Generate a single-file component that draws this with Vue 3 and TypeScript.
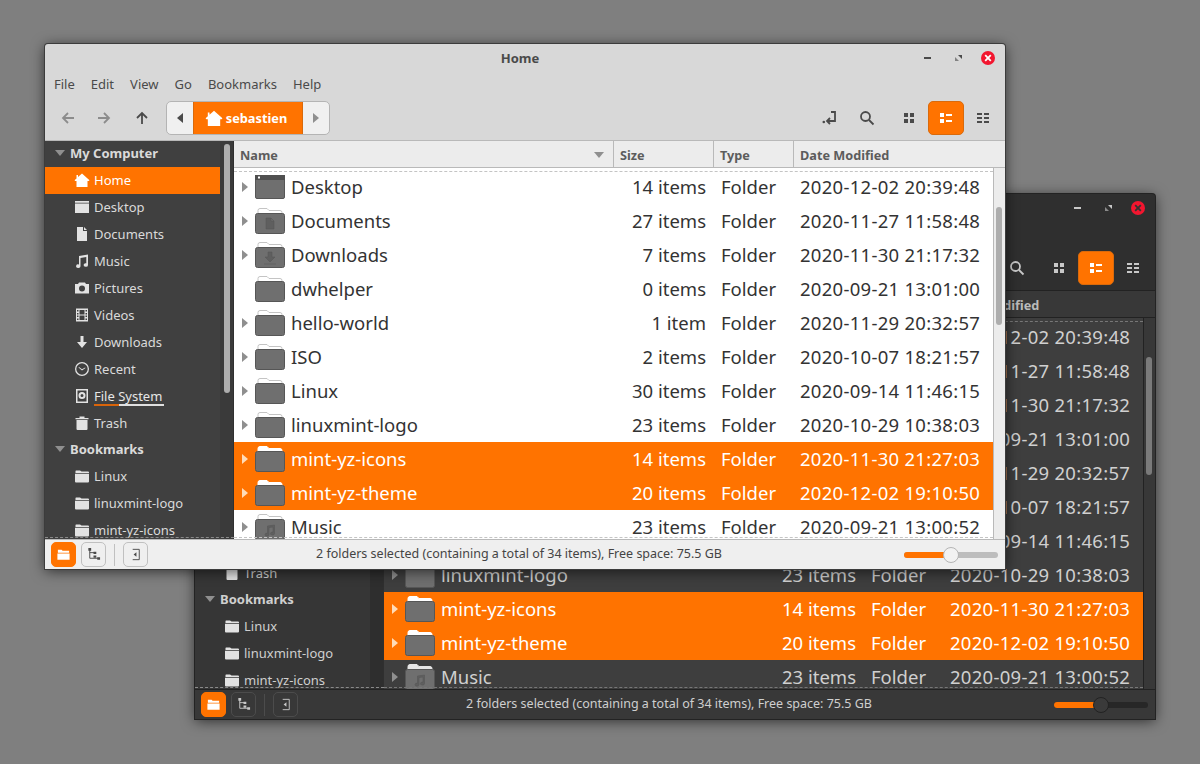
<template>
  <div class="desktop">
    <section v-for="win in windows" :key="win.theme" class="window" :class="win.theme">
      <header class="titlebar">
        <span></span>
        <h1>Home</h1>
        <div class="controls">
          <svg viewBox="0 0 16 16"><rect x="4" y="7" width="7" height="2" class="glyph" /></svg>
          <svg viewBox="0 0 16 16"><path d="M8 5h4v4z" class="glyph" /><path d="M5 7v4h4z" class="glyph soft" /></svg>
          <svg viewBox="0 0 16 16">
            <circle cx="8" cy="8" r="7" fill="#f2162f" />
            <path d="M5.200 5.200l5.600 5.600M10.800 5.200l-5.600 5.600" class="close-x" />
          </svg>
        </div>
      </header>

      <nav class="menubar">
        <span v-for="item in menu" :key="item">{{ item }}</span>
      </nav>

      <div class="toolbar">
        <button class="tool off"><svg viewBox="0 0 16 16"><path d="M14 8H3M8 3 3 8l5 5" /></svg></button>
        <button class="tool off"><svg viewBox="0 0 16 16"><path d="M2 8h11M8 3l5 5-5 5" /></svg></button>
        <button class="tool up"><svg viewBox="0 0 16 16"><path d="M8 14V3M3 8l5-5 5 5" /></svg></button>
        <div class="pathbar">
          <button class="path-end"><i class="tri left"></i></button>
          <button class="path-home">
            <svg viewBox="0 0 16 16"><path :d="icons.home" /></svg>
            sebastien
          </button>
          <button class="path-end"><i class="tri right"></i></button>
        </div>
        <div class="tool-right">
          <button class="tool"><svg viewBox="0 0 16 16"><path d="M9 2h4v9H5M8 8l-3 3 3 3" /><circle cx="1.800" cy="12" r="1.300" class="solid" /></svg></button>
          <button class="tool"><svg viewBox="0 0 16 16"><circle cx="6.500" cy="6.500" r="4.500" /><path d="m10 10 4.500 4.500" /></svg></button>
          <button class="tool spaced"><svg viewBox="0 0 16 16"><path d="M3 3h4v4H3zM9 3h4v4H9zM3 9h4v4H3zM9 9h4v4H9z" class="solid" /></svg></button>
          <button class="tool active"><svg viewBox="0 0 16 16"><path d="M2 3h4v4H2zM2 9h4v4H2zM8 4h6v2H8zM8 10h6v2H8z" class="solid" /></svg></button>
          <button class="tool"><svg viewBox="0 0 16 16"><path d="M2 3h5v2H2zM9 3h5v2H9zM2 7h5v2H2zM9 7h5v2H9zM2 11h5v2H2zM9 11h5v2H9z" class="solid" /></svg></button>
        </div>
      </div>

      <div class="body">
        <aside class="sidebar">
          <div class="places">
            <template v-for="group in places" :key="group.title">
              <div class="group-title"><i class="tri down"></i>{{ group.title }}</div>
              <div v-for="place in group.items" :key="place.name" class="place" :class="{ current: place.name === 'Home' }">
                <svg viewBox="0 0 16 16"><path :d="icons[place.icon]" fill-rule="evenodd" /></svg>
                <span class="place-name" :class="{ disk: place.icon === 'disk' }">{{ place.name }}</span>
              </div>
            </template>
          </div>
          <div class="side-scroll"><span></span></div>
        </aside>

        <main class="files">
          <div class="columns">
            <div class="column">Name<i class="tri down sort"></i></div>
            <div class="column">Size</div>
            <div class="column">Type</div>
            <div class="column">Date Modified</div>
          </div>
          <div class="list-wrap">
            <div class="list">
              <div v-for="file in files" :key="file.name" class="row" :class="{ selected: file.selected }">
                <div class="name">
                  <i class="tri right expander" :class="{ hidden: file.empty }"></i>
                  <svg v-if="file.kind === 'desktop'" class="folder" viewBox="0 0 30 26">
                    <rect x=".5" y="1.500" width="29" height="23" rx="1.500" class="f-body" />
                    <rect x="0" y="1" width="30" height="5" class="f-bar" />
                    <rect x="3" y="2.500" width="2" height="2" fill="#fff" />
                  </svg>
                  <svg v-else class="folder" viewBox="0 0 30 26">
                    <path d="M3 6V2.500Q3 .5 5 .5h7l2 2h11q2 0 2 2V6" class="f-tab" />
                    <rect x=".5" y="5.500" width="29" height="20" rx="2" class="f-body" />
                    <path v-if="file.kind" :d="emblems[file.kind]" class="f-emblem" />
                  </svg>
                  <span>{{ file.name }}</span>
                </div>
                <div class="size">{{ file.size }}</div>
                <div class="type">Folder</div>
                <div class="date">{{ file.date }}</div>
              </div>
            </div>
            <div class="list-scroll"><span></span></div>
          </div>
        </main>
      </div>

      <footer class="statusbar">
        <button class="side-btn on"><svg viewBox="0 0 16 16"><path d="M2 3h4l1 1h7v2H2zM1.500 7h13v6.500h-13z" /></svg></button>
        <button class="side-btn"><svg viewBox="0 0 16 16"><path d="M4 2v10h9M4 6h5" class="tree" /><path d="M2.500 1h3v3h-3zM8 5h3v2.500H8zM8 9h3v2.500H8zM12 11h3v2.500h-3z" /></svg></button>
        <span class="divider"></span>
        <button class="side-btn"><svg viewBox="0 0 16 16"><path d="M5 2.500h7v11H5" class="tree" /><path d="M9 5.500v5L6 8z" /></svg></button>
        <div class="status-text">2 folders selected (containing a total of 34 items), Free space: 75.5 GB</div>
        <div class="zoom">
          <span class="zoom-fill"></span>
          <span class="zoom-knob"></span>
        </div>
      </footer>
    </section>
  </div>
</template>

<script setup lang="ts">
type IconName = 'home' | 'desktop' | 'doc' | 'music' | 'camera' | 'film' | 'down' | 'clock' | 'disk' | 'trash' | 'folder'

const windows = [{ theme: 'dark' }, { theme: 'light' }]

const menu = ['File', 'Edit', 'View', 'Go', 'Bookmarks', 'Help']

const icons: Record<IconName, string> = {
  home: 'M8 1.500 4 5V3H2.500v3.400L.5 8.200l.8.8H2.500v6h11V9h1.200l.8-.8z',
  desktop: 'M1 2h14v1.800H1zM1 4.600h14V14H1z',
  doc: 'M3 1h6v4h4v10H3zM10 1l3 3h-3z',
  music: 'M5 3l9-1.500V12a2.200 1.800 0 1 1-1.700-1.700V4L6.500 5v8.200a2.200 1.800 0 1 1-1.500-1.700z',
  camera: 'M1 4h3l1-1.500h6L12 4h3v9.500H1zM8 5.500a3 3 0 1 0 0 6 3 3 0 0 0 0-6z',
  film: 'M2 1.500h12v13H2zM3 3v1.500h1.500V3zM3 6v1.500h1.500V6zM3 8.500V10h1.500V8.500zM3 11.500V13h1.500v-1.500zM11.500 3v1.500H13V3zM11.500 6v1.500H13V6zM11.500 8.500V10H13V8.500zM11.500 11.500V13H13v-1.500zM5.500 3v4.500h5V3zM5.500 8.500V13h5V8.500z',
  down: 'M6.500 2h3v6H13l-5 6-5-6h3.500z',
  clock: 'M8 1a7 7 0 1 0 0 14A7 7 0 0 0 8 1zm0 1.300a5.700 5.700 0 1 1 0 11.400A5.700 5.700 0 0 1 8 2.300zM4.500 6.500l3.500 3 3.500-2.500-.4-.6L8 8.200 5 5.900z',
  disk: 'M2 1h12v14H2zM3.500 2.500v11h9v-11zM8 4a3.500 3.500 0 1 0 0 7 3.500 3.500 0 0 0 0-7zm0 2a1.500 1.500 0 1 1 0 3 1.500 1.500 0 0 1 0-3z',
  trash: 'M1.500 3h4V1.500h5V3h4v1.200h-13zM2.500 5h11v9a1 1 0 0 1-1 1h-9a1 1 0 0 1-1-1z',
  folder: 'M2 2.500h4l1.500 1H14a1 1 0 0 1 1 1V5H1.500v-2zM1 5.800h14v7.700a1 1 0 0 1-1 1H2a1 1 0 0 1-1-1z'
}

const places: { title: string; items: { name: string; icon: IconName }[] }[] = [
  {
    title: 'My Computer',
    items: [
      { name: 'Home', icon: 'home' },
      { name: 'Desktop', icon: 'desktop' },
      { name: 'Documents', icon: 'doc' },
      { name: 'Music', icon: 'music' },
      { name: 'Pictures', icon: 'camera' },
      { name: 'Videos', icon: 'film' },
      { name: 'Downloads', icon: 'down' },
      { name: 'Recent', icon: 'clock' },
      { name: 'File System', icon: 'disk' },
      { name: 'Trash', icon: 'trash' }
    ]
  },
  {
    title: 'Bookmarks',
    items: [
      { name: 'Linux', icon: 'folder' },
      { name: 'linuxmint-logo', icon: 'folder' },
      { name: 'mint-yz-icons', icon: 'folder' }
    ]
  }
]

const emblems: Record<string, string> = {
  doc: 'M11 10h5l3 3v8h-8zM16 10v3h3',
  down: 'M13 10h4v5h3l-5 5-5-5h3zM9 22h12',
  music: 'M12.500 12l7-1v8.500a2 1.500 0 1 1-1.500-1.400V13l-4 .6v7a2 1.500 0 1 1-1.500-1.400z'
}

const files = [
  { name: 'Desktop', size: '14 items', date: '2020-12-02 20:39:48', kind: 'desktop' },
  { name: 'Documents', size: '27 items', date: '2020-11-27 11:58:48', kind: 'doc' },
  { name: 'Downloads', size: '7 items', date: '2020-11-30 21:17:32', kind: 'down' },
  { name: 'dwhelper', size: '0 items', date: '2020-09-21 13:01:00', empty: true },
  { name: 'hello-world', size: '1 item', date: '2020-11-29 20:32:57' },
  { name: 'ISO', size: '2 items', date: '2020-10-07 18:21:57' },
  { name: 'Linux', size: '30 items', date: '2020-09-14 11:46:15' },
  { name: 'linuxmint-logo', size: '23 items', date: '2020-10-29 10:38:03' },
  { name: 'mint-yz-icons', size: '14 items', date: '2020-11-30 21:27:03', selected: true },
  { name: 'mint-yz-theme', size: '20 items', date: '2020-12-02 19:10:50', selected: true },
  { name: 'Music', size: '23 items', date: '2020-09-21 13:00:52', kind: 'music' }
]
</script>

<style>
body {
  background: #7f7f7f;
}
</style>

<style scoped>
.desktop {
  position: relative;
  width: 1200px;
  height: 764px;
  overflow: hidden;
  background: #7f7f7f;
  font-family: "Noto Sans", "Open Sans", sans-serif;
}

.desktop * {
  box-sizing: border-box;
}

.window {
  position: absolute;
  isolation: isolate;
  width: 960px;
  height: 525px;
  display: flex;
  flex-direction: column;
  background: var(--chrome);
  color: var(--text);
  box-shadow: 0 0 0 1px var(--edge), 0 2px 14px rgba(0, 0, 0, 0.65);
  border-radius: 3px 3px 0 0;
}

.window.light {
  left: 45px;
  top: 44px;
  --chrome: #d8d8d8;
  --edge: #3c3c3c;
  --text: #4a4a4a;
  --line: #b9b9b9;
  --head: #ececec;
  --head-text: #5c5c5c;
  --list: #fff;
  --list-text: #333;
  --side: #404040;
  --strip: #3a3a3a;
  --side-text: #dadada;
  --thumb: #adadad;
  --status: #efefef;
  --status-text: #444;
  --btn-line: #c0c0c0;
  --expander: #9a9a9a;
  --track: #bdbdbd;
  --knob: #f2f2f2;
  --knob-line: #b5b5b5;
  --tab: #fff;
  --tab-line: #c4c4c4;
  --dash: #c4c4c4;
}

.window.dark {
  left: 195px;
  top: 194px;
  --chrome: #2f2f2f;
  --edge: #232323;
  --text: #c8c8c8;
  --line: #222;
  --head: #383838;
  --head-text: #bbb;
  --list: #3e3e3e;
  --list-text: #d0d0d0;
  --side: #363636;
  --strip: #2e2e2e;
  --side-text: #cfcfcf;
  --thumb: #7a7a7a;
  --status: #383838;
  --status-text: #cfcfcf;
  --btn-line: #4c4c4c;
  --expander: #a0a0a0;
  --track: #272727;
  --knob: #3a3a3a;
  --knob-line: #222;
  --tab: #e6e6e6;
  --tab-line: #e6e6e6;
  --dash: #777;
}

.titlebar {
  height: 28px;
  flex: none;
  display: grid;
  grid-template-columns: 1fr auto 1fr;
  align-items: center;
}

.titlebar h1 {
  margin: 0;
  font-size: 13px;
  font-weight: 700;
  color: var(--text);
  transform: translateX(-5px);
}

.controls {
  display: flex;
  justify-content: flex-end;
  gap: 14px;
  padding-right: 9px;
}

.controls svg {
  width: 16px;
  height: 16px;
}

.glyph {
  fill: var(--text);
}

.glyph.soft {
  opacity: 0.6;
}

.close-x {
  stroke: #fff;
  stroke-width: 1.800;
}

.dark .close-x {
  stroke: #333;
}

.menubar {
  height: 24px;
  flex: none;
  display: flex;
  align-items: center;
  gap: 16px;
  padding-left: 9px;
  font-size: 13px;
}

.toolbar {
  height: 45px;
  flex: none;
  display: flex;
  align-items: flex-start;
  padding: 5px 4px 0 5px;
  border-bottom: 1px solid var(--line);
}

.tool {
  width: 36px;
  height: 34px;
  padding: 0;
  display: grid;
  place-items: center;
  background: none;
  border: 1px solid transparent;
  border-radius: 5px;
}

.tool svg {
  width: 16px;
  height: 16px;
  fill: none;
  stroke: var(--text);
  stroke-width: 1.800;
}

.tool svg .solid {
  fill: var(--text);
  stroke: none;
}

.tool.off svg {
  stroke: #8c8c8c;
}

.tool.up {
  margin-left: 2px;
}

.tool.active {
  background: #ff7300;
  border-color: #d96a0c;
}

.tool.active svg .solid {
  fill: #fff;
}

.pathbar {
  margin-left: 6px;
  height: 34px;
  display: flex;
  border: 1px solid #b4b4b4;
  border-radius: 5px;
  overflow: hidden;
  background: #f0f0f0;
}

.dark .pathbar {
  border-color: #222;
  background: #3a3a3a;
}

.path-end {
  width: 26px;
  padding: 0;
  display: grid;
  place-items: center;
  background: none;
  border: 0;
}

.path-home {
  width: 110px;
  padding: 0 4px 0 0;
  display: flex;
  align-items: center;
  justify-content: center;
  gap: 3px;
  background: #ff7300;
  border: 0;
  border-inline: 1px solid #d96a0c;
  color: #fff;
  font: 700 12.800px "Noto Sans", sans-serif;
}

.path-home svg {
  width: 18px;
  height: 18px;
  fill: #fff;
}

.tool-right {
  margin-left: auto;
  display: flex;
  gap: 1px;
}

.tool.spaced {
  margin-left: 5px;
}

.tri {
  display: inline-block;
  width: 0;
  height: 0;
  border-style: solid;
  border-color: transparent;
}

.tri.left {
  border-width: 5px 6px 5px 0;
  border-right-color: var(--text);
}

.tri.right {
  border-width: 5px 0 5px 6px;
  border-left-color: #8f8f8f;
}

.tri.down {
  border-width: 6px 5px 0;
  border-top-color: #8f8f8f;
}

.body {
  flex: 1;
  min-height: 0;
  display: flex;
}

.sidebar {
  width: 189px;
  flex: none;
  display: flex;
  position: relative;
  background: var(--side);
  color: var(--side-text);
  font-size: 13px;
}

.sidebar::after {
  content: "";
  position: absolute;
  left: 0;
  right: 0;
  bottom: 1px;
  border-bottom: 1px dashed #8a8a8a;
}

.places {
  flex: 1;
  min-width: 0;
  overflow: hidden;
}

.group-title {
  height: 26px;
  display: flex;
  align-items: center;
  gap: 5px;
  padding: 0 0 2px 10px;
  font-weight: 700;
}

.place {
  height: 27px;
  display: flex;
  align-items: center;
  padding: 0 0 2px 29px;
}

.place svg {
  width: 16px;
  height: 16px;
  flex: none;
  margin-right: 4px;
  fill: #e2e2e2;
}

.place.current {
  background: #ff7300;
  color: #fff;
}

.place.current svg {
  fill: #fff;
}

.place-name.disk {
  position: relative;
  color: #e6e6e6;
}

.place-name.disk::after {
  content: "";
  position: absolute;
  left: 0;
  right: -2px;
  bottom: -1px;
  height: 2px;
  background: linear-gradient(90deg, #d9640a 36%, #e0e0e0 36%);
}

.side-scroll {
  width: 14px;
  flex: none;
  background: var(--strip);
  border-right: 1px solid #2f2f2f;
  padding: 3px 3px 0 4px;
}

.side-scroll span {
  display: block;
  height: 249px;
  border-radius: 3px;
  background: var(--thumb);
}

.files {
  flex: 1;
  min-width: 0;
  display: flex;
  flex-direction: column;
  background: var(--head);
}

.columns {
  height: 27px;
  flex: none;
  display: grid;
  grid-template-columns: 380px 100px 80px 199px;
  border-bottom: 1px solid var(--line);
  width: 771px;
}

.column {
  display: flex;
  align-items: center;
  justify-content: space-between;
  padding: 2px 6px 0;
  font-size: 12.700px;
  font-weight: 700;
  color: var(--head-text);
  border-right: 1px solid var(--line);
}

.column:last-child {
  border-right: 0;
}

.sort {
  margin-right: 3px;
  border-top-color: #777;
}

.list-wrap {
  flex: 1;
  min-height: 0;
  display: flex;
}

.list {
  width: 760px;
  flex: none;
  padding-top: 2px;
  position: relative;
  overflow: hidden;
  background: var(--list);
  color: var(--list-text);
  border-right: 1px solid var(--line);
  font-size: 18.500px;
}

.list::before,
.list::after {
  content: "";
  position: absolute;
  left: 0;
  right: 0;
  z-index: 1;
  border-top: 1px dashed var(--dash);
}

.list::before {
  top: 3px;
}

.list::after {
  bottom: 1px;
}

.row {
  height: 34px;
  display: grid;
  grid-template-columns: 380px 100px 80px 199px;
  align-items: center;
}

.row.selected {
  background: #ff7300;
  color: #fff;
}

.name {
  display: flex;
  align-items: center;
  padding-left: 8px;
}

.name span {
  margin-bottom: 2px;
}

.expander {
  margin-right: 7px;
  border-left-color: var(--expander);
}

.row.selected .expander {
  border-left-color: #ffdcb8;
}

.expander.hidden {
  visibility: hidden;
}

.folder {
  width: 30px;
  height: 26px;
  flex: none;
  margin-right: 6px;
}

.f-tab {
  fill: var(--tab);
  stroke: var(--tab-line);
}

.selected .f-tab {
  fill: #fff;
  stroke: #fff;
}

.f-body {
  fill: #6f6f6f;
  stroke: #565656;
}

.f-bar {
  fill: #4f4f4f;
}

.f-emblem {
  fill: #5f5f5f;
  stroke: #585858;
  stroke-width: 0.6;
}

.size,
.type,
.date {
  padding-bottom: 2px;
}

.size {
  text-align: right;
  padding-right: 8px;
}

.type {
  padding-left: 7px;
}

.date {
  padding-left: 6px;
  letter-spacing: 0.280px;
}

.list-scroll {
  flex: 1;
  padding: 39px 3px 0 2px;
}

.list-scroll span {
  display: block;
  height: 118px;
  border-radius: 3px;
  background: var(--thumb);
}

.statusbar {
  height: 30px;
  flex: none;
  display: flex;
  align-items: center;
  padding: 0 7px 0 6px;
  background: var(--status);
  color: var(--status-text);
  border-top: 1px solid var(--line);
}

.side-btn {
  width: 25px;
  height: 25px;
  padding: 0;
  margin-right: 5px;
  display: grid;
  place-items: center;
  background: none;
  border: 1px solid var(--btn-line);
  border-radius: 5px;
}

.side-btn svg {
  width: 15px;
  height: 15px;
  fill: var(--text);
}

.side-btn .tree {
  fill: none;
  stroke: var(--text);
}

.side-btn.on {
  background: #ff7300;
  border-color: #ff7300;
}

.side-btn.on svg {
  fill: #fff;
}

.divider {
  width: 1px;
  height: 22px;
  margin: 0 8px 0 3px;
  background: var(--btn-line);
}

.status-text {
  flex: 1;
  text-align: center;
  padding: 0 19px 2px 0;
  font-size: 12.500px;
}

.zoom {
  width: 94px;
  height: 6px;
  position: relative;
  border-radius: 3px;
  background: var(--track);
}

.zoom-fill {
  display: block;
  width: 46px;
  height: 6px;
  border-radius: 3px;
  background: #ff7300;
}

.zoom-knob {
  position: absolute;
  left: 39px;
  top: -5px;
  width: 16px;
  height: 16px;
  border-radius: 50%;
  background: var(--knob);
  border: 1px solid var(--knob-line);
}
</style>
